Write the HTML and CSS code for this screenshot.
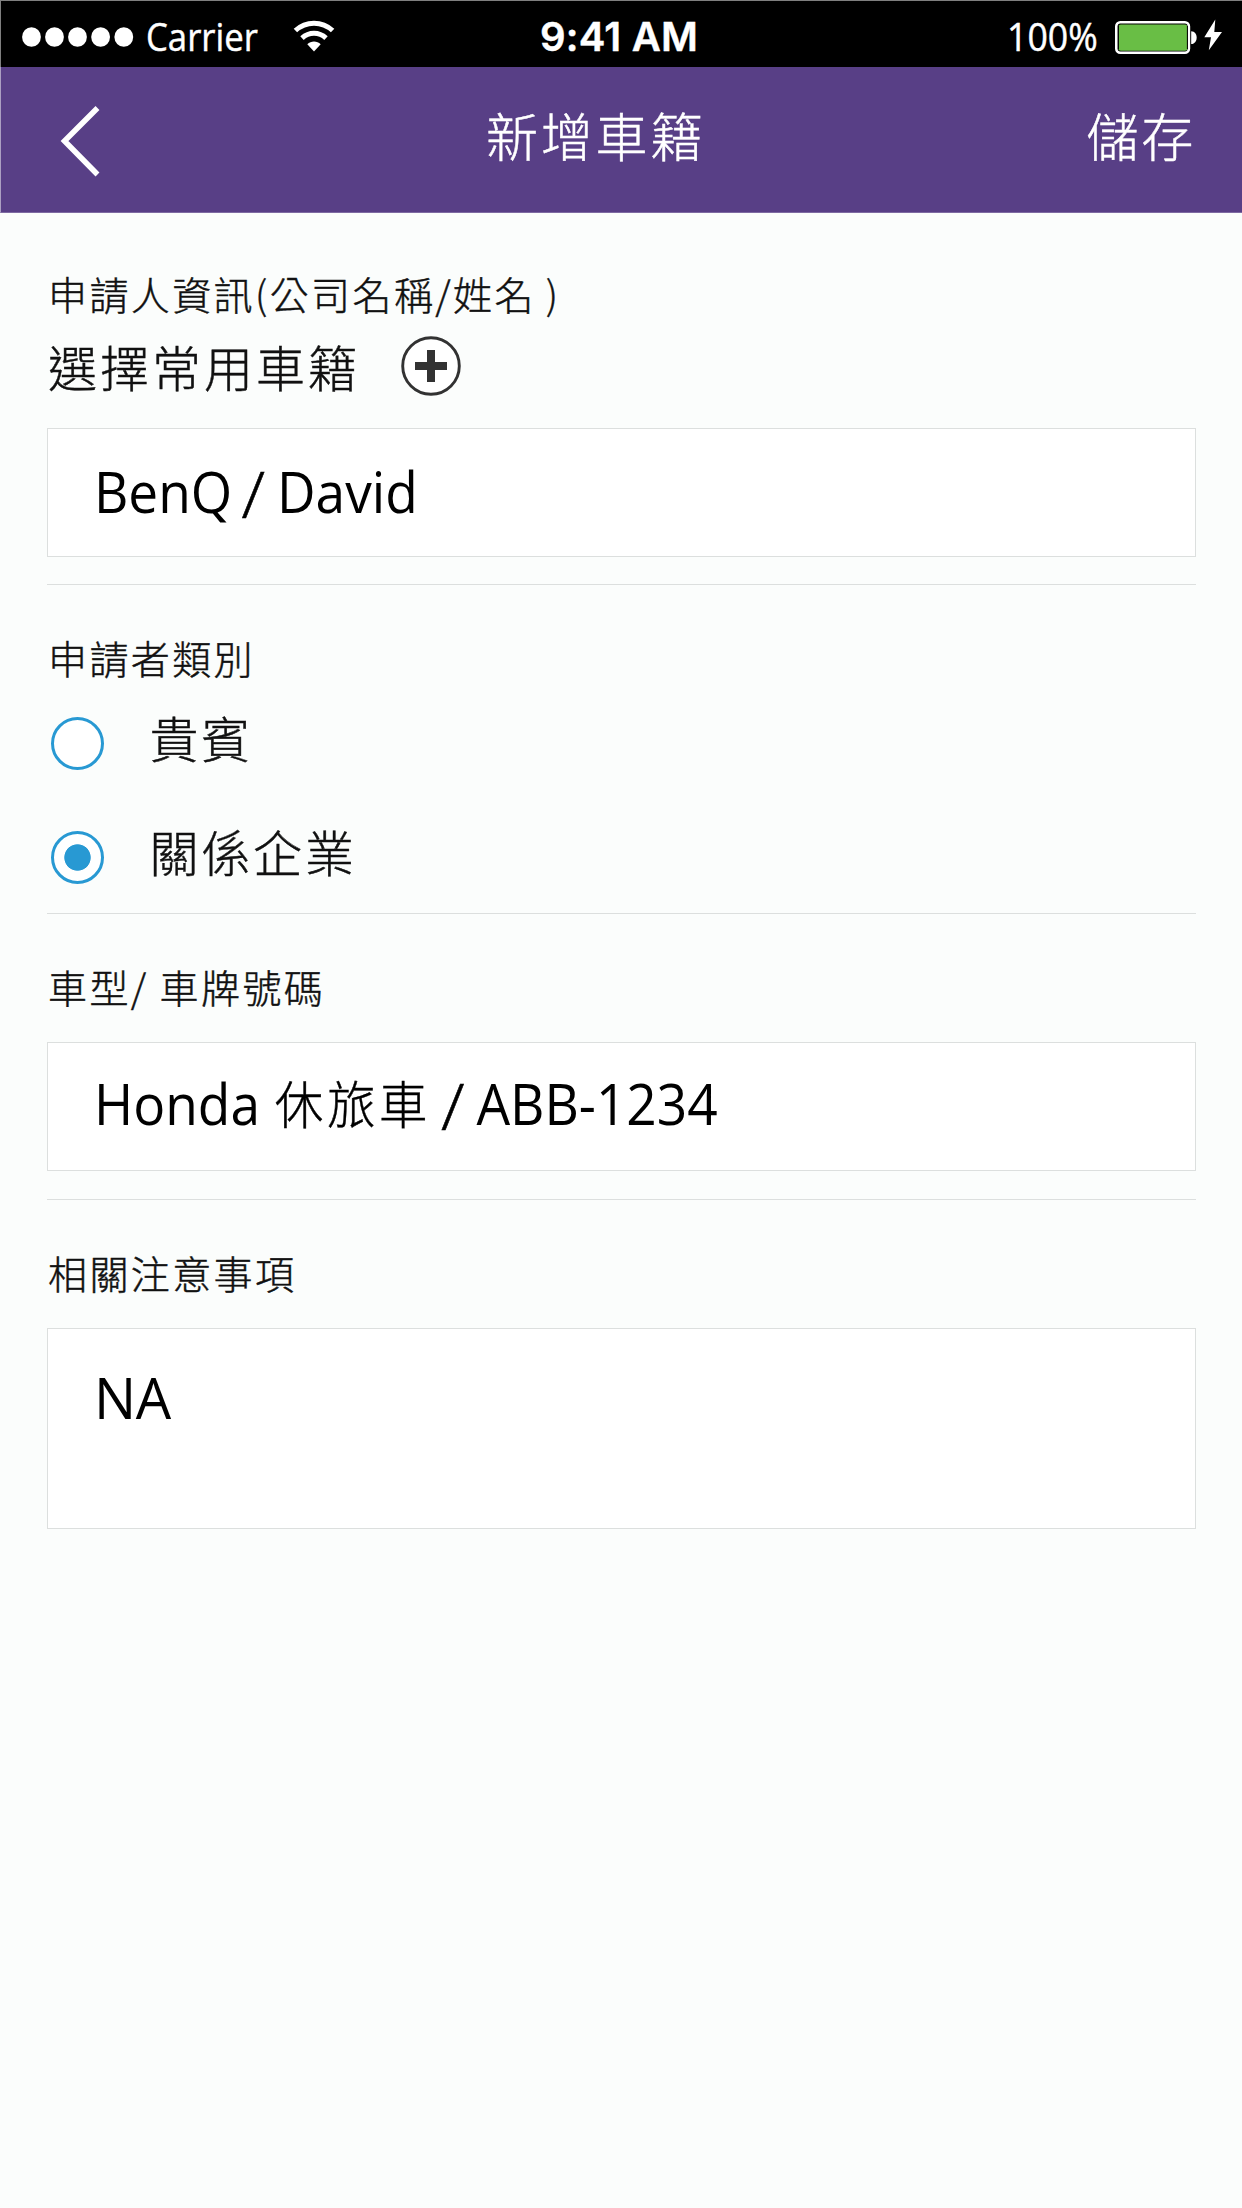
FILE: index.html
```html
<!DOCTYPE html>
<html lang="zh-Hant">
<head>
<meta charset="utf-8">
<title>新增車籍</title>
<link rel="stylesheet" href="styles.css">
</head>
<body>
<div class="status-bar">
  <div class="status-left">
    <svg class="signal" width="112" height="20" viewBox="0 0 112 20" fill="#fff"><ellipse cx="9.5" cy="10" rx="9.4" ry="9.8"/><ellipse cx="32.5" cy="10" rx="9.4" ry="9.8"/><ellipse cx="55.5" cy="10" rx="9.4" ry="9.8"/><ellipse cx="78.6" cy="10" rx="9.4" ry="9.8"/><ellipse cx="101.8" cy="10" rx="9.4" ry="9.8"/></svg>
    <span class="carrier">Carrier</span>
    <svg class="wifi" width="42" height="32" viewBox="0 0 42 32"><g fill="none" stroke="#fff" stroke-width="5"><path d="M2.4 10.5C13 .7 29 .7 39.6 10.5"/><path d="M9 18.2C16 11.7 26 11.7 33 18.2"/></g><path d="M14.300 24.300C18 20.500 24 20.500 27.700 24.300L21 31.500Z" fill="#fff"/></svg>
  </div>
  <div class="clock">9:41 AM</div>
  <div class="status-right">
    <span class="percent">100%</span>
    <svg class="battery" width="108" height="36" viewBox="0 0 108 36"><rect x="1.300" y="4.300" width="72.600" height="30.400" rx="4" fill="none" stroke="#fff" stroke-width="2.600"/><rect x="3.400" y="6.400" width="69" height="26.300" rx="2.500" fill="#69be45"/><path d="M3.400 8V31M72.400 8V31" stroke="#000" stroke-width="1"/><path d="M76.200 13.200C83.500 13.200 83.500 26 76.200 26Z" fill="#fff"/><path d="M100.300 1.500L89.300 19.300H96L93.800 32.200L107 14H99.300Z" fill="#fff"/></svg>
  </div>
</div>
<header class="nav-bar">
  <svg class="back" width="44" height="74" viewBox="0 0 44 74"><path d="M40.500 4L7.500 37L40.500 70.500" fill="none" stroke="#fff" stroke-width="5.500"/></svg>
  <h1 class="title">新增車籍</h1>
  <span class="save">儲存</span>
</header>
<main class="form">
  <section class="group owner">
    <div class="label">申請人資訊(公司名稱/姓名<span class="close">)</span></div>
    <div class="picker">
      <span>選擇常用車籍</span>
      <svg width="60" height="60" viewBox="0 0 60 60"><circle cx="30" cy="30" r="28.300" fill="#fff" stroke="#323232" stroke-width="2.900"/><path d="M14 30H46M30 14V46" stroke="#323232" stroke-width="8"/></svg>
    </div>
    <div class="field"><span class="value">BenQ<span class="bar">/</span>David</span></div>
  </section>
  <section class="group kind">
    <div class="label">申請者類別</div>
    <div class="option"><i class="radio"></i><span>貴賓</span></div>
    <div class="option"><i class="radio checked"></i><span>關係企業</span></div>
  </section>
  <section class="group car">
    <div class="label">車型<span class="slash">/</span>車牌號碼</div>
    <div class="field"><span class="value">Honda <span class="han">休旅車</span><span class="bar">/</span>ABB-1234</span></div>
  </section>
  <section class="group notes">
    <div class="label">相關注意事項</div>
    <div class="field tall"><span class="value">NA</span></div>
  </section>
</main>
</body>
</html>
```
FILE: styles.css
```css
* { box-sizing: border-box; }
body {
  margin: 0;
  min-height: 2208px;
  background: #fbfdfc;
  color: #111;
  font-family: "Noto Sans CJK TC", sans-serif;
  font-weight: 300;
  -webkit-text-stroke: .45px currentColor;
}
svg { display: block; flex: none; }
.status-bar {
  height: 67px;
  border-top: 1px solid #7f7f7f;
  border-left: 1px solid #7f7f7f;
  background: #000;
  color: #fff;
  display: grid;
  grid-template-columns: 539px 160px 1fr;
  font: 400 39px/72px "Open Sans", sans-serif;
  white-space: nowrap;
}
.status-left { display: flex; padding-left: 21px; }
.signal { margin-top: 26px; }
.carrier { width: 111px; margin: -1px 0 0 12px; transform: scaleX(.89); transform-origin: 0 50%; }
.wifi { margin: 19px 0 0 36px; }
.clock { font: 600 40px/72px Inter, sans-serif; letter-spacing: .2px; }
.status-right { display: flex; justify-content: flex-end; padding-right: 19px; }
.percent { width: 90px; margin: -1px 18px 0 0; transform: scaleX(.915); transform-origin: 0 50%; }
.battery { margin-top: 17px; }
.nav-bar {
  height: 146px;
  padding: 0 46px 0 56px;
  display: flex;
  align-items: flex-start;
  border-left: 1px solid #ab9fc2;
  border-bottom: 1px solid #7e6aa2;
  background: #583f86;
  color: #fff;
  font-size: 52px;
  line-height: 60px;
  letter-spacing: 2.8px;
}
.back { margin-top: 37px; }
.title { margin: 38px auto 0 385px; font: inherit; }
.save { margin-top: 38px; }
.form { padding: 0 46px 0 47px; }
.group { border-bottom: 1px solid #dcdfde; }
.label { padding-left: 1px; font-size: 39px; line-height: 48px; letter-spacing: 2.4px; white-space: nowrap; }
.close { margin-left: 10px; }
.slash { margin-right: 11px; }
.owner { height: 372px; padding-top: 56px; }
.picker { display: flex; align-items: center; gap: 41px; height: 60px; margin: 19px 0 32px; padding-left: 1px; font-size: 49px; line-height: 60px; letter-spacing: 3px; }
.field { height: 129px; display: flex; align-items: center; padding: 0 0 4px 46px; border: 1px solid #dcdfde; background: #fff; color: #000; -webkit-text-stroke: 0; }
.value { font: 400 56px/76px "Open Sans", "Noto Sans CJK TC", sans-serif; white-space: pre; transform: scaleX(.95); transform-origin: 0 50%; }
.bar { display: inline-block; font-weight: 300; transform: scale(1.3, 1.15); transform-origin: 50% 24px; margin: 0 15.5px 0 12.5px; -webkit-text-stroke: .5px currentColor; }
.han { display: inline-block; line-height: 60px; font-family: "Noto Sans CJK TC", sans-serif; font-size: 51px; font-weight: 300; letter-spacing: 3.9px; margin-right: 1.5px; transform: translate(1px, -1px); -webkit-text-stroke: .45px currentColor; }
.kind { height: 329px; padding-top: 48px; }
.option { display: flex; align-items: center; gap: 46px; height: 60px; padding-left: 3.5px; margin-top: 26px; font-size: 49px; line-height: 60px; letter-spacing: 2.8px; }
.option + .option { margin-top: 54px; }
.radio { width: 53px; height: 53px; flex: none; margin-top: 12px; border: 3px solid #2899d3; border-radius: 50%; background: #fff; }
.checked { background: radial-gradient(circle, #2899d3 12.800px, #fff 13.600px); }
.car { height: 286px; padding-top: 48px; }
.car .field { margin-top: 32px; padding-bottom: 7px; }
.notes { padding-top: 48px; border: 0; }
.notes .field { margin-top: 32px; }
.notes .tall { height: 201px; align-items: flex-start; padding-top: 30px; }
.tall .value { transform: none; letter-spacing: -.5px; }
```
